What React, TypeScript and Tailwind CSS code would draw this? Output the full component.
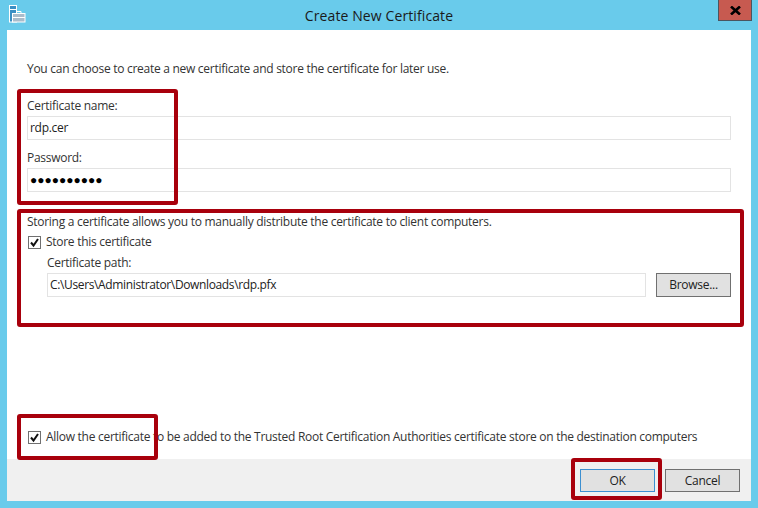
const font = "[font-family:'Open_Sans',sans-serif]";

function Checkbox() {
  return (
    <span className="flex h-[13px] w-[13px] shrink-0 items-center justify-center border border-[#707070] bg-white">
      <svg width="11" height="11" viewBox="0 0 11 11" fill="none">
        <path d="M2 5.5 L4.5 8.5 L9 2" stroke="#111" strokeWidth="2" />
      </svg>
    </span>
  );
}

function Field({ value, className = '' }: { value: string; className?: string }) {
  return (
    <div className={`flex h-[24px] items-center border border-[#e3e3e3] bg-white pl-[2px] text-[#222] ${className}`}>
      {value}
    </div>
  );
}

function Button({ label, className = '' }: { label: string; className?: string }) {
  return (
    <div className={`flex h-[23px] w-[75px] items-center justify-center border bg-[#e1e1e1] text-[#222] ${className}`}>
      {label}
    </div>
  );
}

function Marker({ className }: { className: string }) {
  return <div className={`pointer-events-none absolute rounded-[3px] border-[4px] border-[#a8000c] ${className}`} />;
}

export default function App() {
  return (
    <div className={`relative flex h-[508px] w-[758px] flex-col overflow-hidden bg-[#69cbeb] pb-[7px] pl-[7px] pr-[7px] text-[12px] tracking-[-0.28px] text-[#333] ${font}`}>
      <div className="relative flex h-[30px] shrink-0 items-center justify-center">
        <svg className="absolute left-[2px] top-[5px]" width="17" height="18" viewBox="0 0 17 18" fill="none">
          <rect x="0.5" y="0.5" width="7" height="16.5" fill="#3a8fc4" stroke="#fff" />
          <path d="M1 4.5 H7" stroke="#fff" />
          <rect x="3.5" y="8.5" width="12.5" height="8.5" fill="#a9bccb" stroke="#fff" />
          <path d="M7.5 8 V6.5 H12 V8" stroke="#fff" />
          <path d="M4 12.5 H16" stroke="#fff" />
        </svg>
        <span className="text-[14px] tracking-[0.1px] text-[#1a1a1a]">Create New Certificate</span>
        <div className="absolute right-[-1px] top-0 flex h-[21px] w-[34px] items-center justify-center border border-t-0 border-[#4a5560] bg-[#c75a50]">
          <svg width="11" height="9" viewBox="0 0 11 9" fill="none">
            <path d="M1 0.5 L10 8.5 M10 0.5 L1 8.5" stroke="#000" strokeWidth="2.6" />
          </svg>
        </div>
      </div>
      <div className="flex min-h-0 flex-1 flex-col bg-white">
        <div className="flex flex-1 flex-col pl-[20px] pr-[20px]">
          <p className="mt-[31px] leading-[16px]">You can choose to create a new certificate and store the certificate for later use.</p>
          <p className="mt-[21px] leading-[16px]">Certificate name:</p>
          <Field value="rdp.cer" className="mt-[2px]" />
          <p className="mt-[10px] leading-[16px]">Password:</p>
          <Field value="●●●●●●●●●●" className="mt-[2px] text-[12px] tracking-[0px] text-black" />
          <p className="mt-[22px] leading-[16px]">Storing a certificate allows you to manually distribute the certificate to client computers.</p>
          <div className="mt-[4px] flex items-center gap-[5px] pl-[1px] leading-[16px]">
            <Checkbox />
            <span>Store this certificate</span>
          </div>
          <div className="flex flex-col pl-[20px]">
            <p className="mt-[5px] leading-[16px]">Certificate path:</p>
            <div className="mt-[2px] flex gap-[10px]">
              <Field value="C:\Users\Administrator\Downloads\rdp.pfx" className="flex-1 tracking-[-0.36px]" />
              <Button label="Browse..." className="h-[24px] border-[#707070]" />
            </div>
          </div>
          <div className="mt-auto mb-[14px] flex items-center gap-[5px] pl-[1px] leading-[16px]">
            <Checkbox />
            <span>Allow the certificate to be added to the Trusted Root Certification Authorities certificate store on the destination computers</span>
          </div>
        </div>
        <div className="flex h-[42px] shrink-0 items-start justify-end gap-[10px] bg-[#f0f0f0] pr-[11px] pt-[10px]">
          <Button label="OK" className="border-[#3c8fd0]" />
          <Button label="Cancel" className="border-[#707070]" />
        </div>
      </div>
      <Marker className="left-[17px] top-[89px] h-[116px] w-[161px]" />
      <Marker className="left-[17px] top-[209px] h-[118px] w-[727px]" />
      <Marker className="left-[17px] top-[414px] h-[46px] w-[141px]" />
      <Marker className="left-[571px] top-[458px] h-[42px] w-[91px]" />
    </div>
  );
}
